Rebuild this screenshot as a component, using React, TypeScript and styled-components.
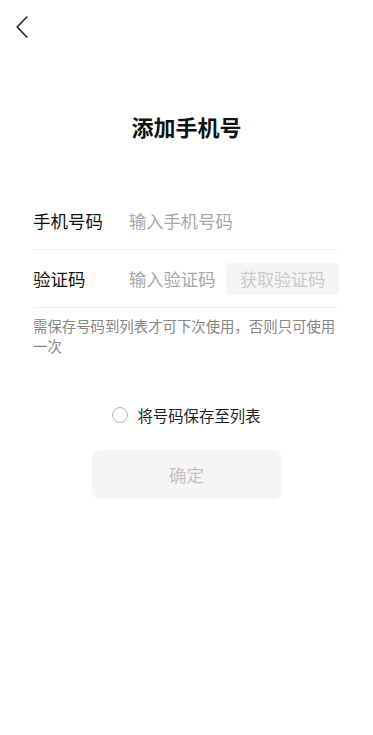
import React from 'react';
import styled, { createGlobalStyle } from 'styled-components';

const GlobalStyle = createGlobalStyle`
  html, body {
    margin: 0;
    padding: 0;
    background: #ffffff;
  }
  body {
    font-family: "Noto Sans CJK SC", "Noto Sans", sans-serif;
  }
`;

const Page = styled.div`
  width: 373px;
  min-height: 735px;
  background: #ffffff;
  display: flex;
  flex-direction: column;
`;

const TopBar = styled.div`
  height: 56px;
  box-sizing: border-box;
  padding: 16px 0 0 16px;
`;

const BackButton = styled.button`
  background: none;
  border: none;
  padding: 0;
  width: 12px;
  height: 22px;
  display: block;
  cursor: pointer;
`;

const Title = styled.h1`
  margin: 55px 0 0;
  font-size: 22px;
  line-height: 30px;
  font-weight: 700;
  color: #111111;
  text-align: center;
`;

const Form = styled.div`
  margin-top: 51px;
  padding: 0 34px 0 33px;
  display: flex;
  flex-direction: column;
`;

const Row = styled.div`
  height: 57px;
  display: flex;
  align-items: center;
  border-bottom: 1px solid #f2f2f2;
`;

const Label = styled.div`
  width: 96px;
  flex-shrink: 0;
  font-size: 17.5px;
  color: #111111;
`;

const Input = styled.input`
  flex: 1;
  min-width: 0;
  border: none;
  outline: none;
  padding: 0;
  background: transparent;
  font-family: "Noto Sans CJK SC", "Noto Sans", sans-serif;
  font-size: 17.3px;
  color: #111111;

  &::placeholder {
    color: #a8a8a8;
  }
`;

const CodeButton = styled.button`
  height: 32px;
  padding: 0 14px;
  border: none;
  border-radius: 4px;
  background: #f5f5f5;
  color: #cacaca;
  font-family: "Noto Sans CJK SC", "Noto Sans", sans-serif;
  font-size: 17px;
  flex-shrink: 0;
`;

const Note = styled.p`
  margin: 8px 0 0;
  font-size: 14.4px;
  line-height: 20px;
  color: #868686;
`;

const SaveRow = styled.label`
  margin-top: 48px;
  display: flex;
  justify-content: center;
  align-items: center;
  gap: 9px;
  font-size: 15.4px;
  line-height: 22px;
  color: #1f1f1f;
`;

const Radio = styled.span`
  width: 16px;
  height: 16px;
  box-sizing: border-box;
  border: 1px solid #b5b5b5;
  border-radius: 50%;
`;

const ConfirmButton = styled.button`
  align-self: center;
  margin-top: 24px;
  width: 190px;
  height: 49px;
  border: none;
  border-radius: 8px;
  background: #f5f5f5;
  color: #c4c4c4;
  font-family: "Noto Sans CJK SC", "Noto Sans", sans-serif;
  font-size: 17.5px;
`;

const App: React.FC = () => {
  return (
    <>
      <GlobalStyle />
      <Page>
        <TopBar>
          <BackButton aria-label="返回">
            <svg width="12" height="22" viewBox="0 0 12 22" fill="none">
              <path d="M10.8 1 L1.2 11 L10.8 21" stroke="#222" strokeWidth="1.6" strokeLinecap="round" strokeLinejoin="round" />
            </svg>
          </BackButton>
        </TopBar>

        <Title>添加手机号</Title>

        <Form>
          <Row>
            <Label>手机号码</Label>
            <Input placeholder="输入手机号码" />
          </Row>
          <Row>
            <Label>验证码</Label>
            <Input placeholder="输入验证码" />
            <CodeButton disabled>获取验证码</CodeButton>
          </Row>
          <Note>需保存号码到列表才可下次使用，否则只可使用一次</Note>
        </Form>

        <SaveRow>
          <Radio />
          将号码保存至列表
        </SaveRow>

        <ConfirmButton disabled>确定</ConfirmButton>
      </Page>
    </>
  );
};

export default App;
